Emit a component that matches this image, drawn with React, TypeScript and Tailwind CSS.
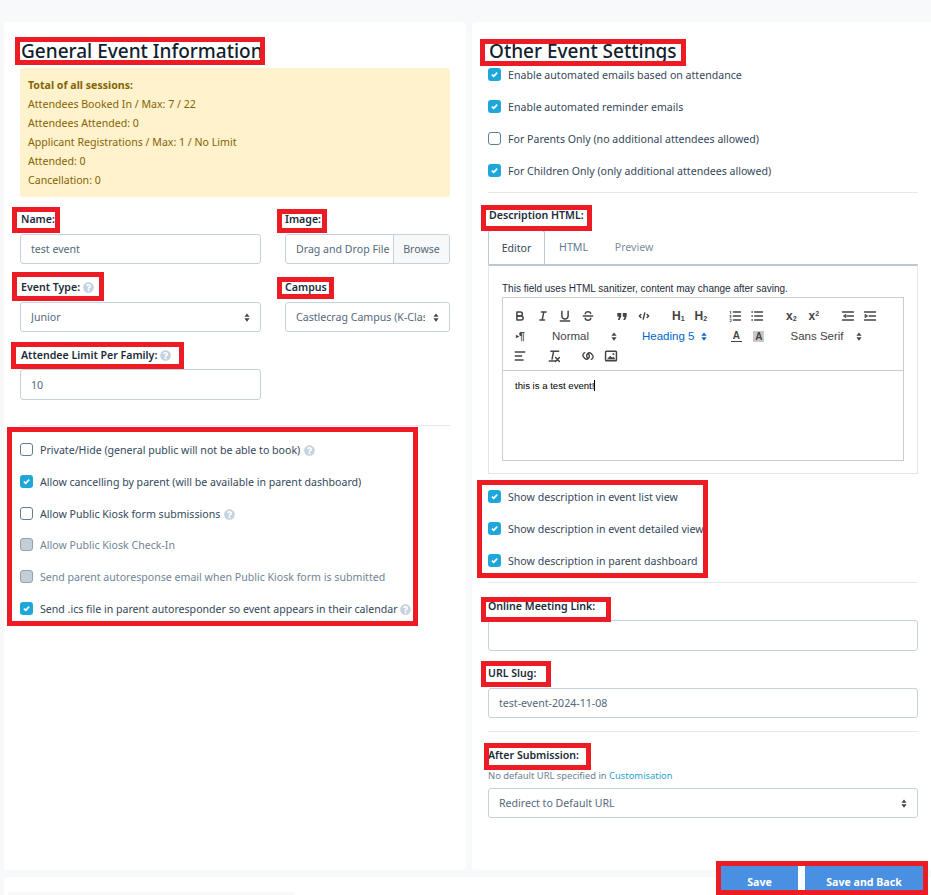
import React from "react";
import { FaQuestionCircle } from "react-icons/fa";

const Help = ({ className = "" }: { className?: string }) => (
  <FaQuestionCircle className={"inline-block text-[11px] text-[#c5d3df] " + className} />
);

const Check = ({ state }: { state: "on" | "off" | "dis" }) => {
  if (state === "on")
    return (
      <span className="flex h-[13px] w-[13px] shrink-0 items-center justify-center rounded-[3px] bg-[#1fa7dc]">
        <svg viewBox="0 0 12 12" className="h-[9px] w-[9px]" fill="none" stroke="#fff" strokeWidth="2.2">
          <path d="M2.5 6.2 5 8.5 9.5 3.5" />
        </svg>
      </span>
    );
  if (state === "dis")
    return <span className="block h-[13px] w-[13px] shrink-0 rounded-[3px] border border-[#8ea3b3] bg-[#c3ced7]" />;
  return <span className="block h-[13px] w-[13px] shrink-0 rounded-[3px] border border-[#5f7f97] bg-white" />;
};

const CheckRow = ({
  state,
  children,
  muted,
  className = "",
}: {
  state: "on" | "off" | "dis";
  children: React.ReactNode;
  muted?: boolean;
  className?: string;
}) => (
  <div className={"flex h-[13px] items-center gap-[7px] whitespace-nowrap " + className}>
    <Check state={state} />
    <span className={muted ? "text-[#718596]" : "text-[#33475a]"}>{children}</span>
  </div>
);

const Label = ({ children, className = "" }: { children: React.ReactNode; className?: string }) => (
  <div className={"flex h-[16px] items-center gap-[3px] whitespace-nowrap font-semibold text-[#1c2b3a] " + className}>
    {children}
  </div>
);

const Field = ({ children, className = "" }: { children?: React.ReactNode; className?: string }) => (
  <div
    className={
      "flex h-[30px] items-center overflow-hidden whitespace-nowrap rounded-[3px] border border-[#c5d2dc] bg-white pl-[10px] text-[#55697b] " +
      className
    }
  >
    {children}
  </div>
);

const Arrows = ({ color = "#444" }: { color?: string }) => (
  <svg viewBox="0 0 8 12" className="h-[9px] w-[6px] shrink-0" fill={color}>
    <path d="M4 0.5 7.5 5H0.5Z" />
    <path d="M4 11.5 0.5 7H7.5Z" />
  </svg>
);

const Select = ({ text, className = "" }: { text: string; className?: string }) => (
  <Field className={"justify-between pr-[10px] " + className}>
    <span className="overflow-hidden">{text}</span>
    <span className="ml-[8px] shrink-0">
      <Arrows color="#3c4650" />
    </span>
  </Field>
);

const Ico = ({ children, className = "" }: { children: React.ReactNode; className?: string }) => (
  <span className={"flex h-[20px] w-[22.5px] shrink-0 items-center justify-center " + className}>
    <svg viewBox="0 0 18 18" className="h-[14px] w-[14px]" fill="none" stroke="#444" strokeWidth="1.9" strokeLinecap="round" strokeLinejoin="round">
      {children}
    </svg>
  </span>
);

const TextIco = ({ main, sub, sup }: { main: string; sub?: string; sup?: string }) => (
  <span className="flex h-[20px] w-[22.5px] shrink-0 items-center justify-center font-['Liberation_Sans',sans-serif] text-[12px] font-bold leading-none text-[#444]">
    {main}
    {sub && <span className="mt-[5px] text-[7px]">{sub}</span>}
    {sup && <span className="mb-[5px] text-[7px]">{sup}</span>}
  </span>
);

const Group = ({ children }: { children: React.ReactNode }) => <div className="mr-[11.5px] flex items-center">{children}</div>;

const Picker = ({ text, active, className = "" }: { text: string; active?: boolean; className?: string }) => (
  <div
    className={
      "flex h-[20px] shrink-0 items-center justify-between pl-[9px] pr-[5px] font-['Liberation_Sans',sans-serif] text-[11.5px] " +
      (active ? "text-[#06c] " : "text-[#444] ") +
      className
    }
  >
    {text}
    <Arrows color={active ? "#06c" : "#444"} />
  </div>
);

const Toolbar = () => (
  <div className="flex flex-wrap border-b border-[#ccc] pb-[4px] pl-[6px] pr-[4px] pt-[8px]">
    <Group>
      <Ico>
        <path d="M5 4h4.5a2.5 2.5 0 0 1 0 5H5Z" />
        <path d="M5 9h5.5a2.5 2.5 0 0 1 0 5H5Z" />
      </Ico>
      <Ico>
        <path d="M7 4h6M5 14h6M8 14l2-10" />
      </Ico>
      <Ico>
        <path d="M5 3v6a4 4 0 0 0 8 0V3" />
        <path d="M3 15.5h12" />
      </Ico>
      <Ico>
        <path d="M3 9h12" />
        <path d="M12.5 5.5C12 4 10.5 3.5 9 3.5c-2 0-3.5 1-3.5 2.5" />
        <path d="M5.5 12c0 1.5 1.5 2.5 3.5 2.5s3.5-1 3.5-2.5" />
      </Ico>
    </Group>
    <Group>
      <span className="flex h-[20px] w-[22.5px] items-center justify-center">
        <svg viewBox="0 0 18 18" className="h-[14px] w-[14px]" fill="#444">
          <path d="M3 5h5v4.5L6 14H3.6l1.7-4H3Z" />
          <path d="M10 5h5v4.5L13 14h-2.4l1.7-4H10Z" />
        </svg>
      </span>
      <Ico>
        <path d="M5 7 3 9l2 2M13 7l2 2-2 2M10 5 8 13" />
      </Ico>
    </Group>
    <Group>
      <TextIco main="H" sub="1" />
      <TextIco main="H" sub="2" />
    </Group>
    <Group>
      <Ico>
        <path d="M7 4h9M7 9h9M7 14h9" />
        <path d="M2.5 3h1v3M2.5 8.5h1.5l-1.5 2h1.5M2.5 13h1.500v3H2.500" strokeWidth="1" />
      </Ico>
      <Ico>
        <path d="M6 4h10M6 9h10M6 14h10M2.500 4h.5M2.500 9h.5M2.500 14h.5" />
      </Ico>
    </Group>
    <Group>
      <TextIco main="x" sub="2" />
      <TextIco main="x" sup="2" />
    </Group>
    <Group>
      <Ico>
        <path d="M2 4h14M8 9h8M2 14h14" />
        <path d="M6 7 3 9l3 2Z" fill="#444" strokeWidth="1" />
      </Ico>
      <Ico>
        <path d="M2 4h14M8 9h8M2 14h14" />
        <path d="M3 7l3 2-3 2Z" fill="#444" strokeWidth="1" />
      </Ico>
    </Group>
    <Group>
      <span className="flex h-[20px] w-[22.5px] items-center justify-center font-['Liberation_Sans',sans-serif] text-[11px] font-bold leading-none text-[#444]">
        <span className="text-[6px]">▸</span>¶
      </span>
    </Group>
    <Picker text="Normal" className="mr-[11px] w-[79px]" />
    <Picker text="Heading 5" active className="mr-[13px] w-[79px]" />
    <div className="mr-[11.5px] flex items-center">
      <span className="flex h-[20px] w-[22.5px] flex-col items-center justify-center font-['Liberation_Sans',sans-serif] text-[10px] font-bold leading-[11px] text-[#444]">
        A
        <span className="block h-[1px] w-[11px] bg-[#444]" />
      </span>
      <span className="flex h-[20px] w-[22.5px] items-center justify-center">
        <span className="h-[11px] w-[11px] bg-[#c9c9c9] text-center font-['Liberation_Sans',sans-serif] text-[10px] font-bold leading-[11px] text-[#444]">A</span>
      </span>
    </div>
    <Picker text="Sans Serif" className="w-[85px]" />
    <div className="w-full" />
    <Group>
      <Ico>
        <path d="M3 4h12M3 9h8M3 14h10" />
      </Ico>
    </Group>
    <Group>
      <Ico>
        <path d="M5 3h10M8.500 3 6.500 13M3 15.500h8M11 11l5 5M16 11l-5 5" />
      </Ico>
    </Group>
    <div className="flex items-center">
      <Ico>
        <path d="M7 7h1a3.500 3.500 0 0 1 3.500 3.500A3.500 3.500 0 0 1 8 14H6a3.500 3.500 0 0 1-3-5" strokeWidth="1.8" transform="rotate(45 9 9)" />
        <path d="M11 11h-1a3.500 3.500 0 0 1-3.500-3.500A3.500 3.500 0 0 1 10 4h2a3.500 3.500 0 0 1 3 5" strokeWidth="1.8" transform="rotate(45 9 9)" />
      </Ico>
      <Ico>
        <rect x="2" y="3" width="14" height="12" rx="1" />
        <path d="M4.500 13 8 9l2.500 2.500L12 10l2 3Z" fill="#444" strokeWidth="0.6" />
        <circle cx="12" cy="6.500" r="1" fill="#444" strokeWidth="0.5" />
      </Ico>
    </div>
  </div>
);

const rectClass =
  "absolute border-[5px] border-[#ed1c24] pointer-events-none ";

export default function App() {
  return (
    <div className="relative h-[895px] w-[931px] overflow-hidden bg-[#f8f9fa] pl-[4px] pt-[22px] font-['Noto_Sans','Open_Sans',sans-serif] text-[10.6px] leading-[16px]">
      <div className="flex h-[848px] gap-[6px]">
        {/* left card */}
        <section className="w-[462px] shrink-0 rounded-[4px] bg-white pl-[16px] pr-[16px] pt-[17px]">
          <h2 className="ml-[1px] h-[24px] whitespace-nowrap text-[19px] font-medium leading-[24px] text-[#12202e]">General Event Information</h2>
          <div className="mt-[5px] h-[129px] rounded-[3px] bg-[#fff2cc] px-[8px] pt-[8px] leading-[19px] text-[#856404]">
            <div className="font-bold">Total of all sessions:</div>
            <div>Attendees Booked In / Max: 7 / 22</div>
            <div>Attendees Attended: 0</div>
            <div>Applicant Registrations / Max: 1 / No Limit</div>
            <div>Attended: 0</div>
            <div>Cancellation: 0</div>
          </div>
          <div className="mt-[14px] grid grid-cols-[241px_165px] gap-x-[24px]">
            <div>
              <Label className="ml-[1px]">Name:</Label>
              <Field className="mt-[7px]">test event</Field>
            </div>
            <div>
              <Label>Image:</Label>
              <Field className="mt-[7px] pr-0">
                <span className="w-[97px] shrink-0 overflow-hidden">Drag and Drop File</span>
                <span className="flex h-full flex-1 items-center justify-center border-l border-[#c5d2dc] bg-[#f6f8f9]">Browse</span>
              </Field>
            </div>
            <div className="mt-[15px]">
              <Label className="ml-[1px]">
                Event Type: <Help />
              </Label>
              <Select text="Junior" className="mt-[7px]" />
            </div>
            <div className="mt-[15px]">
              <Label>Campus</Label>
              <Select text="Castlecrag Campus (K-Class)" className="mt-[7px]" />
            </div>
            <div className="mt-[15px]">
              <Label className="ml-[1px]">
                Attendee Limit Per Family: <Help />
              </Label>
              <Field className="mt-[6px] h-[31px] text-[#4a7fae]">10</Field>
            </div>
          </div>
          <div className="mt-[25px] h-px bg-[#e6e9ec]" />
          <div className="mt-[17px] flex flex-col gap-[19px]">
            <CheckRow state="off">
              Private/Hide (general public will not be able to book) <Help className="ml-[1px]" />
            </CheckRow>
            <CheckRow state="on">Allow cancelling by parent (will be available in parent dashboard)</CheckRow>
            <CheckRow state="off">
              Allow Public Kiosk form submissions <Help className="ml-[1px]" />
            </CheckRow>
            <CheckRow state="dis" muted className="-mt-[1px]">
              Allow Public Kiosk Check-In
            </CheckRow>
            <CheckRow state="dis" muted>
              Send parent autoresponse email when Public Kiosk form is submitted
            </CheckRow>
            <CheckRow state="on">
              Send .ics file in parent autoresponder so event appears in their calendar <Help />
            </CheckRow>
          </div>
        </section>

        {/* right card */}
        <section className="flex-1 rounded-l-[4px] bg-white pl-[16px] pr-[13px] pt-[17px]">
          <h2 className="ml-[1px] h-[24px] whitespace-nowrap text-[19px] font-medium leading-[24px] text-[#12202e]">Other Event Settings</h2>
          <div className="mt-[5px] flex flex-col gap-[19px]">
            <CheckRow state="on">Enable automated emails based on attendance</CheckRow>
            <CheckRow state="on">Enable automated reminder emails</CheckRow>
            <CheckRow state="off">For Parents Only (no additional attendees allowed)</CheckRow>
            <CheckRow state="on">For Children Only (only additional attendees allowed)</CheckRow>
          </div>
          <div className="mt-[15px] h-px bg-[#e6e9ec]" />
          <Label className="ml-[1px] mt-[14px]">Description HTML:</Label>
          <div className="mt-[7px] flex h-[34px] items-stretch">
            <div className="flex w-[57px] items-center justify-center rounded-t-[3px] border border-b-0 border-[#b9c8d4] bg-white text-[#33475a]">Editor</div>
            <div className="flex w-[57px] items-center justify-center text-[#5f7b93]">HTML</div>
            <div className="flex w-[64px] items-center justify-center text-[#7d8f9e]">Preview</div>
          </div>
          <div className="h-[210px] border border-t-2 border-[#e3e6e9] border-t-[#b9c8d4] px-[13px] pt-[16px]">
            <div className="font-['Liberation_Sans',sans-serif] text-[10px] leading-[14px] text-[#1c2b3a]">This field uses HTML sanitizer, content may change after saving.</div>
            <div className="mt-[1px] h-[164px] border border-[#ccc]">
              <Toolbar />
              <div className="relative pl-[12px] pt-[8px] font-['Liberation_Sans',sans-serif] text-[9.6px] leading-[14px] text-black">
                this is a test event<span className="border-r border-black">!</span>
              </div>
            </div>
          </div>
          <div className="mt-[16px] flex flex-col gap-[19px]">
            <CheckRow state="on">Show description in event list view</CheckRow>
            <CheckRow state="on">Show description in event detailed view</CheckRow>
            <CheckRow state="on">Show description in parent dashboard</CheckRow>
          </div>
          <div className="mt-[15px] h-px bg-[#e6e9ec]" />
          <Label className="mt-[15px]">Online Meeting Link:</Label>
          <Field className="mt-[6px] h-[31px]" />
          <Label className="mt-[14px]">URL Slug:</Label>
          <Field className="mt-[7px]">test-event-2024-11-08</Field>
          <div className="mt-[13px] h-px bg-[#e6e9ec]" />
          <Label className="mt-[15px]">After Submission:</Label>
          <div className="mt-[6px] h-[14px] whitespace-nowrap text-[9.4px] leading-[14px] text-[#6b7f90]">
            No default URL specified in <span className="text-[#2a9fd0]">Customisation</span>
          </div>
          <Select text="Redirect to Default URL" className="mt-[5px]" />
        </section>
      </div>

      <div className="mt-[7px] h-[30px] rounded-tl-[4px] bg-white pt-[15px]">
        <div className="ml-[4px] h-[3px] w-[286px] bg-[#f8f9fa]" />
      </div>

      {/* floating action buttons */}
      <div className="absolute left-[721px] top-[866px] flex h-[29px] bg-white font-bold text-white">
        <button className="flex w-[77px] items-start justify-center bg-[#4a90e2] pt-[8px]">Save</button>
        <span className="w-[7px]" />
        <button className="flex w-[118px] items-start justify-center bg-[#4a90e2] pt-[8px]">Save and Back</button>
      </div>

      {/* red annotation boxes drawn over the screenshot */}
      <div className={rectClass + "left-[15px] top-[37px] h-[28px] w-[250px]"} />
      <div className={rectClass + "left-[12px] top-[207px] h-[26px] w-[48px]"} />
      <div className={rectClass + "left-[277px] top-[209px] h-[24px] w-[50px]"} />
      <div className={rectClass + "left-[12px] top-[272px] h-[29px] w-[92px]"} />
      <div className={rectClass + "left-[277px] top-[277px] h-[22px] w-[57px]"} />
      <div className={rectClass + "left-[11px] top-[342px] h-[27px] w-[173px]"} />
      <div className={rectClass + "left-[7px] top-[427px] h-[199px] w-[411px]"} />
      <div className={rectClass + "left-[480px] top-[39px] h-[27px] w-[206px]"} />
      <div className={rectClass + "left-[481px] top-[205px] h-[26px] w-[111px]"} />
      <div className={rectClass + "left-[477px] top-[480px] h-[98px] w-[231px]"} />
      <div className={rectClass + "left-[481px] top-[597px] h-[25px] w-[130px]"} />
      <div className={rectClass + "left-[481px] top-[661px] h-[26px] w-[70px]"} />
      <div className={rectClass + "left-[484px] top-[743px] h-[27px] w-[107px]"} />
      <div className={rectClass + "left-[716px] top-[861px] h-[34px] w-[212px]"} />
    </div>
  );
}
